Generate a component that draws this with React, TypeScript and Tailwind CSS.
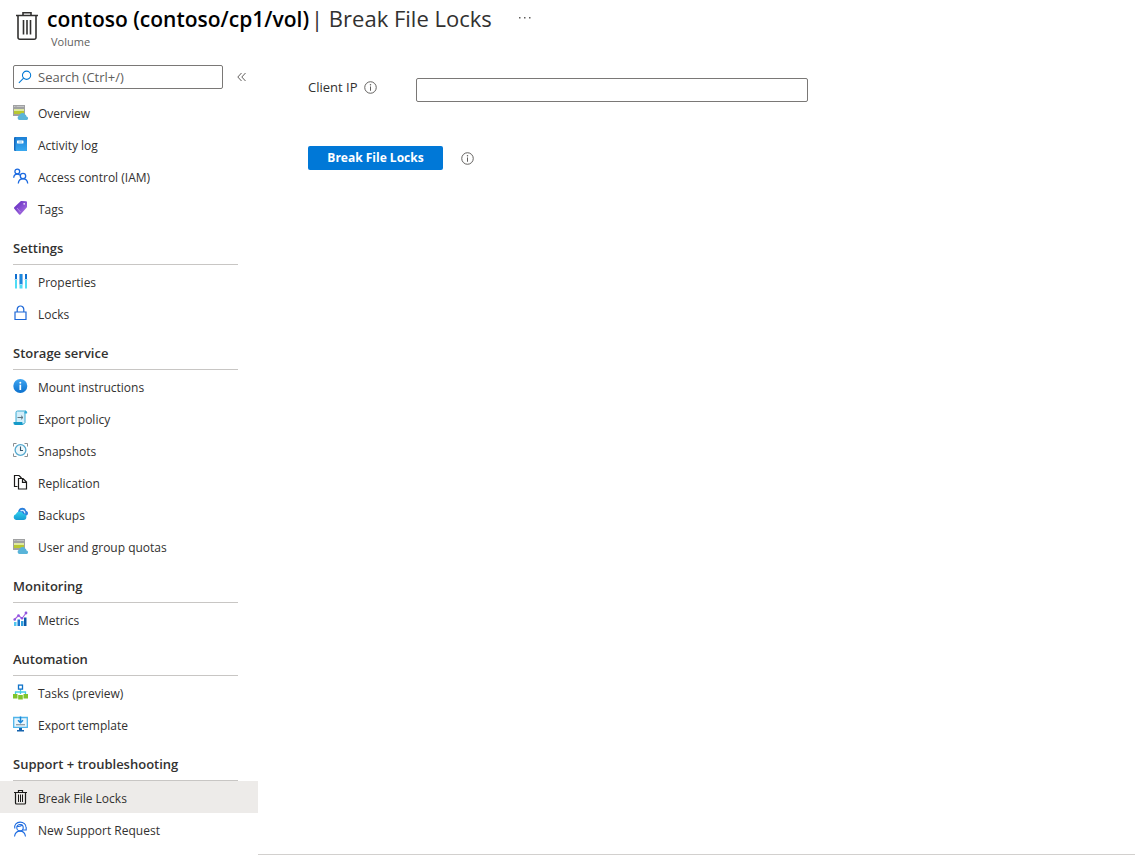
import type { ReactNode } from "react";

function Svg({ children, size = 16 }: { children: ReactNode; size?: number }) {
  return (
    <svg width={size} height={size} viewBox="0 0 16 16" fill="none" aria-hidden="true" className="shrink-0">
      {children}
    </svg>
  );
}

function VolumeIcon() {
  return (
    <svg width="32" height="32" viewBox="0 0 32 32" fill="none" stroke="#323130" strokeWidth="1.600" aria-hidden="true">
      <path d="M5 5.500h22M12 5.500V2.800h8v2.700" />
      <path d="M7 5.500v22a1.800 1.800 0 0 0 1.800 1.800h14.400a1.800 1.800 0 0 0 1.800-1.800v-22" />
      <path d="M12.500 10v14.500M16 10v14.500M19.500 10v14.500" />
    </svg>
  );
}

function TrashIcon() {
  return (
    <Svg>
      <g stroke="#1b1a19">
        <path d="M1 3.500h13M5.500 3.500v-2h4v2" strokeWidth="1.200" />
        <path d="M2.500 3.500V14a1 1 0 0 0 1 1h8a1 1 0 0 0 1-1V3.500" strokeWidth="1.200" />
        <path d="M5.500 5.500V13M7.500 5.500V13M9.500 5.500V13" />
      </g>
    </Svg>
  );
}

function OverviewIcon() {
  return (
    <Svg>
      <path d="M0 1h12v11H0z" fill="#a0a1a2" />
      <path d="M1 2h1.500v1H1zM3.500 2H11v1H3.500z" fill="#c4c5c6" />
      <path d="M1 5h10v2H1z" fill="#dfe9a0" />
      <path d="M1 7h10v3H1z" fill="#b8c832" />
      <path d="M6.500 16a2.200 2.200 0 0 1-.3-4.300 3.300 3.300 0 0 1 6-1.300 2.600 2.600 0 0 1 1.300 2A1.900 1.900 0 0 1 14 16z" fill="#59b4d9" />
    </Svg>
  );
}

function LogIcon() {
  return (
    <Svg>
      <defs>
        <linearGradient id="log" x1="0" y1="0" x2="0" y2="1">
          <stop stopColor="#1c80d6" />
          <stop offset="1" stopColor="#39a9f0" />
        </linearGradient>
      </defs>
      <rect x="1" y="1" width="13" height="14" rx="1" fill="#1468bd" />
      <rect x="2.500" y="1" width="11.500" height="14" rx="1" fill="url(#log)" />
      <rect x="4" y="4.500" width="6.500" height="3" rx=".4" fill="#fff" />
      <path d="M5.500 6h3.500" stroke="#7cc1f0" />
    </Svg>
  );
}

function PeopleIcon() {
  return (
    <Svg>
      <g stroke="#1b6ae0" strokeWidth="1.300">
        <circle cx="4.300" cy="3.500" r="2.400" />
        <circle cx="10" cy="8" r="2.700" />
        <path d="M.7 9.800C.9 7.500 2.300 6.200 4.300 6.200c1 0 1.900.3 2.600 1M5.300 15.500c.2-3 2-4.700 4.700-4.700s4.500 1.700 4.700 4.700" />
      </g>
    </Svg>
  );
}

function TagIcon() {
  return (
    <Svg>
      <defs>
        <linearGradient id="tag" x1="0" y1="0" x2="1" y2="1">
          <stop stopColor="#5b24bd" />
          <stop offset="1" stopColor="#b27ae6" />
        </linearGradient>
      </defs>
      <path d="M1.300 7.300 7.600 1.300a1 1 0 0 1 .7-.3L13 1.300a1 1 0 0 1 1 1v4.500a1 1 0 0 1-.3.7L7.500 14.500a1 1 0 0 1-1.400 0L1.300 8.700a1 1 0 0 1 0-1.400z" fill="url(#tag)" />
      <circle cx="11.200" cy="3.800" r=".9" fill="#efe4fa" />
      <path d="m4 8 3.500 4" stroke="#c9a4ef" strokeWidth=".7" />
    </Svg>
  );
}

function PropertiesIcon() {
  return (
    <Svg>
      <path d="M2 1h2v5H2zM6.500 1h3v10h-3zM12 1h2v5h-2z" fill="#0f6fd1" />
      <path d="M2 7h2v8.500H2zM6.500 12h3v3.500h-3zM12 7h2v8.500h-2z" fill="#50dcf5" />
      <path d="M7.500 1h1v10h-1z" fill="#2da4ea" />
      <path d="M1.500 6h3v1h-3zM11.500 6h3v1h-3zM6 11h4v1H6z" fill="#9fd9f6" />
    </Svg>
  );
}

function LockIcon() {
  return (
    <Svg>
      <path d="M2 7h11v7.500H2zM4.200 7V4.500a3.300 3.500 0 0 1 6.600 0V7" stroke="#1b66d6" strokeWidth="1.200" />
    </Svg>
  );
}

function MountIcon() {
  return (
    <Svg>
      <defs>
        <linearGradient id="mount" x1="0" y1="0" x2="0" y2="1">
          <stop stopColor="#3fa6f2" />
          <stop offset="1" stopColor="#0b70cd" />
        </linearGradient>
      </defs>
      <circle cx="7.300" cy="8" r="7" fill="url(#mount)" />
      <circle cx="7.300" cy="4.700" r="1" fill="#fff" />
      <path d="M7.300 6.700V12" stroke="#fff" strokeWidth="1.700" />
    </Svg>
  );
}

function PolicyIcon() {
  return (
    <Svg>
      <path d="M3 2.500A1.500 1.500 0 0 1 4.500 1H13a1.500 1.500 0 0 0-1 1.500v10A2 2 0 0 1 10 14H3z" fill="#d3eefa" stroke="#3aaad2" />
      <path d="M11.500 3.500V2.300a1.300 1.300 0 0 1 2.600 0v1.200z" fill="#2fa9d4" />
      <path d="M.5 12h9a2 2 0 0 0 1.500 3H2.200A1.900 1.900 0 0 1 .5 13z" fill="#159ac8" />
      <path d="M4.500 7.500H10M8 5.700l2 1.800-2 1.800" stroke="#61727c" />
    </Svg>
  );
}

function SnapshotIcon() {
  return (
    <Svg>
      <path d="M3.500 1.500H.5v3M11.500 1.500h3v3M3.500 14.500H.5v-3M11.500 14.500h3v-3" stroke="#8b8f92" />
      <circle cx="7.500" cy="8" r="5.400" fill="#eef8fc" stroke="#55a9cf" strokeWidth="1.300" />
      <path d="M7.500 4.500V8.500H10" stroke="#37566b" strokeWidth="1.100" />
    </Svg>
  );
}

function ReplicationIcon() {
  return (
    <Svg>
      <path d="M4.500 12.500h-3V1.500H6L8.500 4" stroke="#1b1a19" strokeWidth="1.200" />
      <path d="M5.500 4.500H10l3.500 3.500v7h-8zM9.500 4.500V8.300h4" stroke="#1b1a19" strokeWidth="1.200" />
    </Svg>
  );
}

function BackupIcon() {
  return (
    <Svg>
      <defs>
        <linearGradient id="backup" x1="0" y1="0" x2="0" y2="1">
          <stop stopColor="#31d0ed" />
          <stop offset="1" stopColor="#149bd3" />
        </linearGradient>
      </defs>
      <path d="M5 6.500C5.300 3.300 7 1.800 9.300 1.800c2 0 3.500 1.200 3.800 3 1.200.4 1.900 1.300 1.900 2.400 0 1.500-1 2.500-2.500 2.500H10z" fill="#2a7fdc" />
      <path d="M7.500 5c1.700-1.500 4.500-.4 4.300 2.400" stroke="#d3eafd" strokeWidth="1.300" />
      <path d="M3 14a3 3 0 0 1-.2-5.800A4.100 4.100 0 0 1 10.500 8a3 3 0 0 1-.2 6z" fill="url(#backup)" />
    </Svg>
  );
}

function MetricsIcon() {
  return (
    <Svg>
      <path d="M1 11h2.500v4H1z" fill="#52c7ee" />
      <path d="M4.500 8.500H7V15H4.500z" fill="#1c78cd" />
      <path d="M8 10h2.500v5H8z" fill="#2f9fdf" />
      <path d="M11 6.500h2.500V15H11z" fill="#0c5aa8" />
      <path d="m1.500 8.500 4-4 3.500 3 4-5.500" stroke="#a35de0" strokeWidth="1.100" />
      <g fill="#9255df">
        <circle cx="1.700" cy="8.500" r="1.300" />
        <circle cx="5.500" cy="4.500" r="1.300" />
        <circle cx="9" cy="7.300" r="1.300" />
        <circle cx="13" cy="2" r="1.400" />
      </g>
    </Svg>
  );
}

function TasksIcon() {
  return (
    <Svg>
      <path d="M7.500 5v5M2.500 11V8h10v3" stroke="#45cbe6" strokeWidth="1.300" />
      <rect x="5.500" y="1.100" width="4" height="4" fill="#fff" stroke="#0f73c9" strokeWidth="1.300" />
      <path d="M0 10h4.500v4.500H0zM5.200 11h4.600v4.500H5.200zM10.500 10H15v4.500h-4.500z" fill="#7fc42c" />
    </Svg>
  );
}

function TemplateIcon() {
  return (
    <Svg>
      <path d="M.7 1.500h13.600v9.800H.7z" fill="#e9f6fd" stroke="#4fb4ea" strokeWidth="1.300" />
      <path d="M7.500.5V6M5 4.200l2.500 2.500L10 4.200" stroke="#1886d9" strokeWidth="1.500" />
      <path d="M3 8.700h9" stroke="#8b979f" strokeWidth="1.200" />
      <path d="M6 12h3v2h2v1.500H4V14h2z" fill="#1764ae" />
    </Svg>
  );
}

function SupportIcon() {
  return (
    <Svg>
      <g stroke="#1b6ae0" strokeWidth="1.100">
        <circle cx="7" cy="6.700" r="3.200" />
        <path d="M1.800 7.500C.9 3.500 3.800 1.100 7.100 1.100s6.200 2.300 5.900 5.500M3.700 5.200c2 .5 4.600 0 5.400-1.700M13.200 6v3H9.500" />
        <path d="M1.500 15.500c.5-3.500 2.500-5.400 5.500-5.400s5 1.900 5.500 5.400" />
      </g>
    </Svg>
  );
}

function SearchIcon() {
  return (
    <Svg size={14}>
      <circle cx="9.800" cy="6" r="4.700" stroke="#0078d4" strokeWidth="1.200" />
      <path d="M6.400 9.400 1 14.800" stroke="#0078d4" strokeWidth="1.200" />
    </Svg>
  );
}

function InfoIcon() {
  return (
    <Svg size={13}>
      <circle cx="8" cy="8" r="7.100" stroke="#605e5c" strokeWidth="1.200" />
      <path d="M8 6.700v5.300" stroke="#605e5c" strokeWidth="1.300" />
      <circle cx="8" cy="4.500" r=".9" fill="#605e5c" />
    </Svg>
  );
}

type Item = { label: string; Icon: () => ReactNode; active?: boolean };

const sections: { title?: string; items: Item[] }[] = [
  {
    items: [
      { label: "Overview", Icon: OverviewIcon },
      { label: "Activity log", Icon: LogIcon },
      { label: "Access control (IAM)", Icon: PeopleIcon },
      { label: "Tags", Icon: TagIcon },
    ],
  },
  {
    title: "Settings",
    items: [
      { label: "Properties", Icon: PropertiesIcon },
      { label: "Locks", Icon: LockIcon },
    ],
  },
  {
    title: "Storage service",
    items: [
      { label: "Mount instructions", Icon: MountIcon },
      { label: "Export policy", Icon: PolicyIcon },
      { label: "Snapshots", Icon: SnapshotIcon },
      { label: "Replication", Icon: ReplicationIcon },
      { label: "Backups", Icon: BackupIcon },
      { label: "User and group quotas", Icon: OverviewIcon },
    ],
  },
  { title: "Monitoring", items: [{ label: "Metrics", Icon: MetricsIcon }] },
  {
    title: "Automation",
    items: [
      { label: "Tasks (preview)", Icon: TasksIcon },
      { label: "Export template", Icon: TemplateIcon },
    ],
  },
  {
    title: "Support + troubleshooting",
    items: [
      { label: "Break File Locks", Icon: TrashIcon, active: true },
      { label: "New Support Request", Icon: SupportIcon },
    ],
  },
];

function Sidebar() {
  return (
    <aside className="w-[258px] shrink-0">
      <div className="flex items-center pl-[13px] pt-1">
        <label className="flex h-6 w-[210px] items-center rounded-xs border border-[#7a7876] pl-1">
          <SearchIcon />
          <input
            type="search"
            aria-label="Search"
            placeholder="Search (Ctrl+/)"
            className="ml-1.5 w-full min-w-0 bg-transparent outline-none placeholder:text-[#605e5c]"
          />
        </label>
        <button type="button" aria-label="Collapse menu" className="ml-3.5 text-[#605e5c]">
          <svg width="10" height="10" viewBox="0 0 10 10" fill="none" stroke="currentColor" aria-hidden="true">
            <path d="M4.500 1 .8 5l3.700 4M8.500 1 4.800 5l3.700 4" />
          </svg>
        </button>
      </div>
      <nav className="pt-[7px]">
        {sections.map(({ title, items }) => (
          <section key={title ?? "general"}>
            {title && (
              <h2 className="ml-[13px] mr-5 flex h-[41px] items-end border-b border-[#c8c6c4] pb-1.5 font-semibold leading-5">
                {title}
              </h2>
            )}
            <ul>
              {items.map(({ label, Icon, active }) => (
                <li key={label}>
                  <a
                    href="#"
                    aria-current={active ? "page" : undefined}
                    className={`flex h-8 items-center gap-[9px] pl-[13px] text-xs ${active ? "bg-[#edebe9]" : "hover:bg-[#f3f2f1]"}`}
                  >
                    <Icon />
                    <span className="pt-1 leading-5">{label}</span>
                  </a>
                </li>
              ))}
            </ul>
          </section>
        ))}
      </nav>
    </aside>
  );
}

export default function App() {
  return (
    <div className="flex min-h-screen flex-col bg-white pb-[9px] font-['Open_Sans','Noto_Sans',sans-serif] text-[13px] leading-5 text-[#323130]">
      <header className="flex h-[61px] items-start pl-[11px] pt-1">
        <div className="pt-1.5">
          <VolumeIcon />
        </div>
        <div className="ml-1">
          <h1 className="flex h-7 items-baseline whitespace-nowrap text-[21px] font-semibold leading-7 text-black">
            contoso (contoso/cp1/vol)
            <span className="ml-0.5 text-[22px] font-normal text-[#323130]">| Break File Locks</span>
          </h1>
          <p className="ml-1 text-[11px] text-[#605e5c]">Volume</p>
        </div>
        <button type="button" aria-label="More" className="ml-[26px] mt-3 text-[#605e5c]">
          <svg width="14" height="4" viewBox="0 0 14 4" fill="currentColor" aria-hidden="true">
            <path d="M1 1h1.500v1.500H1zM6 1h1.500v1.500H6zM11 1h1.500v1.500H11z" />
          </svg>
        </button>
      </header>
      <div className="flex flex-1">
        <Sidebar />
        <main className="min-w-0 flex-1 border-b border-[#d2d0ce] pl-[50px] pr-5 pt-[17px]">
          <div className="flex items-start">
            <label htmlFor="client-ip" className="flex w-[108px] shrink-0 items-center gap-1.5 leading-[18px]">
              Client IP
              <InfoIcon />
            </label>
            <input id="client-ip" type="text" className="h-6 w-full max-w-[392px] rounded-xs border border-[#7a7876] px-2 outline-none" />
          </div>
          <div className="mt-11 flex items-center gap-[18px]">
            <button type="button" className="h-6 w-[135px] rounded-xs bg-[#0078d7] text-xs font-bold text-white">
              Break File Locks
            </button>
            <InfoIcon />
          </div>
        </main>
      </div>
    </div>
  );
}
